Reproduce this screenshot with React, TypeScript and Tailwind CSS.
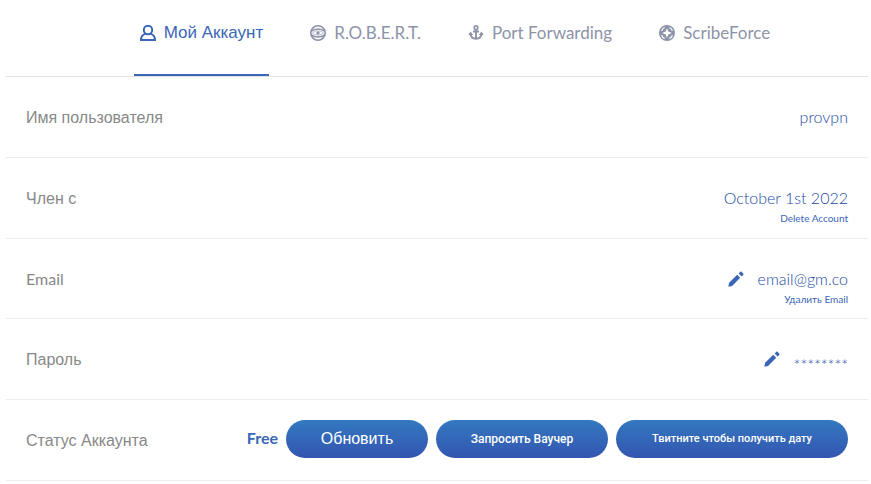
import type { ReactNode } from 'react';
import clsx from 'clsx';

type IconProps = { className?: string };

const UserIcon = ({ className }: IconProps) => (
  <svg viewBox="0 0 16 16" fill="none" stroke="currentColor" strokeWidth="2" className={className} aria-hidden="true">
    <circle cx="8" cy="5" r="4.2" />
    <path d="M5.6 8.6C2.7 9.6 1 11.8 1 15h14C15 11.8 13.3 9.6 10.4 8.6" />
  </svg>
);

const RobertIcon = ({ className }: IconProps) => (
  <svg viewBox="0 0 16 16" fill="none" stroke="currentColor" className={className} aria-hidden="true">
    <circle cx="8" cy="8" r="7.2" strokeWidth="1.6" />
    <path
      d="M1 6.4C3.2 4.8 5.4 4 8 4s4.8.8 7 2.4M1 9.6C3.200 11.200 5.400 12 8 12s4.800-.8 7-2.400"
      strokeWidth="1.600"
    />
    <path d="M2.500 8C4.200 6.500 6 5.900 8 5.900s3.800.6 5.500 2.100c-1.700 1.500-3.500 2.100-5.500 2.100S4.200 9.500 2.500 8z" strokeWidth=".6" />
    <circle cx="8" cy="8" r="1.700" fill="currentColor" stroke="none" />
  </svg>
);

const AnchorIcon = ({ className }: IconProps) => (
  <svg viewBox="0 0 16 16" fill="none" stroke="currentColor" strokeWidth="2" className={className} aria-hidden="true">
    <circle cx="8" cy="2.700" r="1.800" strokeWidth="1.600" />
    <path d="M8 4.600V14M5 6.500h6" strokeWidth="1.900" />
    <path d="M2.600 9c.2 3 2.500 4.700 5.400 4.700s5.200-1.700 5.400-4.700" />
    <path d="M.2 10 2.500 6.500 5.300 10zM10.700 10l2.800-3.500L15.800 10z" fill="currentColor" stroke="none" />
  </svg>
);

const ForceIcon = ({ className }: IconProps) => (
  <svg viewBox="0 0 16 16" fill="currentColor" className={className} aria-hidden="true">
    <circle cx="8" cy="8" r="8" />
    <path d="M8 3.200 9.400 6.600 12.800 8 9.400 9.400 8 12.800 6.600 9.400 3.200 8 6.600 6.600z" fill="white" />
    <path
      d="M2.700 5.800C3 4 4 3 5.800 2.700M10.200 2.700C12 3 13 4 13.300 5.800M13.300 10.200C13 12 12 13 10.200 13.300M5.800 13.300C4 13 3 12 2.700 10.200"
      fill="none"
      stroke="white"
      strokeWidth="1.100"
    />
  </svg>
);

const PencilIcon = ({ className }: IconProps) => (
  <svg viewBox="0 0 16 16" fill="currentColor" className={className} aria-hidden="true">
    <path d="M.3 15.800l.8-4.100 8.100-7.900 3 3-8.100 8.100zM10.600 2.500 12.200.9c.5-.5 1-.5 1.500 0l1.500 1.500c.5.5.5 1 0 1.500l-1.600 1.600z" />
  </svg>
);

const cyrillic = "font-['Liberation_Sans',sans-serif]";

const tabs = [
  { label: 'Мой Аккаунт', icon: UserIcon, active: true },
  { label: 'R.O.B.E.R.T.', icon: RobertIcon },
  { label: 'Port Forwarding', icon: AnchorIcon },
  { label: 'ScribeForce', icon: ForceIcon },
];

const Row = ({ label, latin, children }: { label: string; latin?: boolean; children: ReactNode }) => (
  <div className="flex items-start justify-between border-b border-[#ededed] px-5">
    <dt className={clsx('text-base leading-5 text-[#888]', latin ? 'pt-[30px]' : ['pt-[31px]', cyrillic])}>
      {label}
    </dt>
    {children}
  </div>
);

const Value = ({ children }: { children: ReactNode }) => (
  <dd className="flex flex-col items-end pt-[30px] text-base leading-5 font-light text-[#1c4aa6]">{children}</dd>
);

const SubLink = ({ children }: { children: ReactNode }) => (
  <a href="#" className="text-[10px] leading-5 font-normal text-[#3a66b8]">
    {children}
  </a>
);

const EditButton = ({ label }: { label: string }) => (
  <button type="button" aria-label={label} className="flex h-5 items-center text-[#3a66b8]">
    <PencilIcon className="size-4" />
  </button>
);

const pill = 'h-[38px] rounded-full bg-linear-to-b from-[#3478c0] to-[#3355b0] text-white';

const App = () => {
  return (
    <main className="min-h-screen bg-white pr-[3px] pl-[6px] font-[Lato,'Liberation_Sans',sans-serif] text-[#3a66b8]">
      {/* Tabs */}
      <nav className="border-b border-[#e2e2e2]">
        <ul className="flex justify-center gap-[35px] pl-9">
          {tabs.map(({ label, icon: Icon, active }) => (
            <li key={label}>
              <a
                href="#"
                aria-current={active ? 'page' : undefined}
                className={clsx(
                  'flex h-[76px] items-start gap-2 border-b-2 px-[6px] pt-[23px] text-[17px] leading-5 whitespace-nowrap',
                  active ? 'border-[#3a66b8]' : 'border-transparent text-[#8d93a8]',
                  active && cyrillic,
                )}
              >
                <Icon className="mt-[2px] size-4 shrink-0" />
                {label}
              </a>
            </li>
          ))}
        </ul>
      </nav>

      {/* Account details */}
      <dl className="grid min-h-[404px] auto-rows-fr">
        <Row label="Имя пользователя">
          <Value>provpn</Value>
        </Row>

        <Row label="Член с">
          <Value>
            October 1st 2022
            <SubLink>Delete Account</SubLink>
          </Value>
        </Row>

        <Row label="Email" latin>
          <Value>
            <span className="flex items-start gap-[14px]">
              <EditButton label="Изменить email" />
              email@gm.co
            </span>
            <SubLink>Удалить Email</SubLink>
          </Value>
        </Row>

        <Row label="Пароль">
          <Value>
            <span className="flex items-start gap-[14px]">
              <EditButton label="Изменить пароль" />
              <span className="leading-8">********</span>
            </span>
          </Value>
        </Row>

        <Row label="Статус Аккаунта">
          <dd className="flex gap-2 pt-5">
            <span className="pt-2 text-base leading-5 font-bold">Free</span>
            <button type="button" className={clsx(pill, cyrillic, 'w-[142px] text-base')}>
              Обновить
            </button>
            <button type="button" className={clsx(pill, "w-[172px] font-[Roboto,sans-serif] text-xs font-medium")}>
              Запросить Ваучер
            </button>
            <button type="button" className={clsx(pill, "w-[232px] font-[Roboto,sans-serif] text-[11px] font-medium")}>
              Твитните чтобы получить дату
            </button>
          </dd>
        </Row>
      </dl>
    </main>
  );
};

export default App;
